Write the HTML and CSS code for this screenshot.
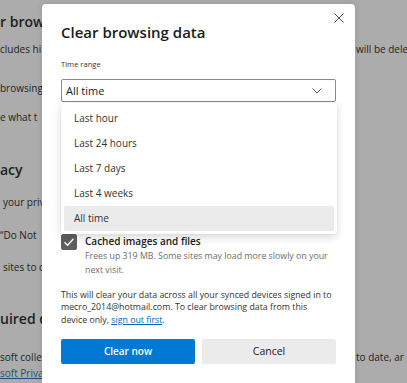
FILE: index.html
```html
<!DOCTYPE html>
<html lang="en">
<head>
<meta charset="utf-8">
<title>Clear browsing data</title>
<link rel="stylesheet" href="styles.css">
</head>
<body>
<div class="page">
  <div class="row heading r1"><span class="l">r brow</span></div>
  <div class="row r2"><span class="l">cludes hi</span><span class="r">will be dele</span></div>
  <div class="row r3"><span class="l">browsing</span></div>
  <div class="row r4"><span class="l">e what t</span></div>
  <div class="row heading r5"><span class="l">acy</span></div>
  <div class="row r6"><span class="l ind">your priv</span></div>
  <div class="row r7"><span class="l">“Do Not</span></div>
  <div class="row r8"><span class="l ind">sites to c</span></div>
  <div class="row heading r9"><span class="l">uired d</span></div>
  <div class="row r10"><span class="l">soft colle</span><span class="r">to date, ar</span></div>
  <div class="row r11"><span class="l"><span class="bglink">soft Priva</span></span></div>
</div>

<div class="dialog">
  <button class="close" aria-label="Close">
    <svg width="10" height="10" viewBox="0 0 10 10"><path d="M0.5 0.5L9.5 9.5M9.5 0.5L0.5 9.5" stroke="#4a4a4a" stroke-width="1" fill="none"/></svg>
  </button>
  <h2 class="title">Clear browsing data</h2>
  <div class="label">Time range</div>
  <div class="select">
    <span>All time</span>
    <svg width="10" height="6" viewBox="0 0 10 6"><path d="M0.5 0.5L5 5L9.5 0.5" stroke="#555" stroke-width="1" fill="none"/></svg>
  </div>

  <div class="options">
    <div class="opt">
      <span class="box checked"><svg width="16" height="16" viewBox="0 0 16 16"><path d="M3.5 8.2L6.6 11.2L12.5 4.8" stroke="#fff" stroke-width="1.3" fill="none"/></svg></span>
      <div class="otext"><div class="otitle">Cached images and files</div><div class="odesc">Frees up 319 MB. Some sites may load more slowly on your<br>next visit.</div></div>
    </div>
  </div>

  <p class="info">This will clear your data across all your synced devices signed in to<br>mecro_2014@hotmail.com. To clear browsing data from this<br>device only, <a class="link" href="#">sign out first</a>.</p>

  <div class="buttons">
    <button class="btn primary">Clear now</button>
    <button class="btn secondary">Cancel</button>
  </div>

  <ul class="dropdown">
    <li class="item">Last hour</li>
    <li class="item">Last 24 hours</li>
    <li class="item">Last 7 days</li>
    <li class="item">Last 4 weeks</li>
    <li class="item selected">All time</li>
  </ul>
</div>
</body>
</html>
```

FILE: styles.css
```css
html, body {
  margin: 0;
  padding: 0;
}
body {
  width: 407px;
  height: 383px;
  overflow: hidden;
  background: #acacac;
  font-family: "Open Sans", "Noto Sans", sans-serif;
  position: relative;
}

/* background settings page (dimmed) */
.page {
  color: #1f1f1f;
  font-size: 10px;
  line-height: 16px;
}
.row {
  display: flex;
  white-space: nowrap;
}
.row .l {
  flex: none;
  width: 42px;
}
.row .r {
  flex: none;
  margin-left: 314px;
}
.ind { padding-left: 3px; box-sizing: border-box; }
.heading {
  font-size: 14px;
  font-weight: 600;
  line-height: 24px;
}
.r1 { margin-top: 10px; }
.r2 { margin-top: 7px; }
.r3 { margin-top: 23px; }
.r4 { margin-top: 13px; }
.r5 { margin-top: 33px; }
.r6 { margin-top: 12px; }
.r7 { margin-top: 17px; }
.r8 { margin-top: 16px; }
.r9 { margin-top: 32px; }
.r10 { margin-top: 18px; }
.r11 { margin-top: 0; }
.bglink {
  color: #1d4c80;
  text-decoration: underline;
}

/* dialog */
.dialog {
  position: absolute;
  left: 42px;
  top: 4px;
  width: 313px;
  height: 420px;
  box-sizing: border-box;
  padding: 18px 19px 0;
  background: #fff;
  border-radius: 4px;
  box-shadow: 0 0 6px rgba(0,0,0,0.12);
}
.close {
  position: absolute;
  right: 11px;
  top: 9px;
  width: 10px;
  height: 10px;
  padding: 0;
  border: 0;
  background: none;
  display: block;
}
.close svg { display: block; }
.title {
  margin: 0;
  font-size: 15px;
  font-weight: 600;
  line-height: 20px;
  color: #1b1b1b;
}
.label {
  margin-top: 17px;
  font-size: 7.6px;
  line-height: 10px;
  color: #333;
}
.select {
  margin-top: 10px;
  height: 23px;
  box-sizing: border-box;
  border: 1px solid #8a8a8a;
  border-radius: 2px;
  display: flex;
  align-items: center;
  justify-content: space-between;
  padding: 0 13px 0 4px;
  font-size: 11px;
  color: #1b1b1b;
}
.select svg { display: block; }

.options {
  margin-top: 132px;
  display: flex;
  flex-direction: column;
  gap: 12px;
}
.opt {
  display: flex;
  align-items: flex-start;
  gap: 8px;
}
.box {
  flex: none;
  width: 16px;
  height: 16px;
  box-sizing: border-box;
  border: 1px solid #616161;
  border-radius: 2px;
  background: #fff;
}
.box.checked {
  background: #5f5f5f;
  border-color: #5f5f5f;
}
.box svg { display: block; margin: -1px; }
.otitle {
  font-size: 10px;
  font-weight: 600;
  line-height: 15px;
  color: #1b1b1b;
}
.odesc {
  font-size: 8.8px;
  line-height: 14px;
  color: #6e6e6e;
}
.info {
  margin: 11.6px 0 0;
  font-size: 8.8px;
  line-height: 12.8px;
  color: #333;
}
.link {
  color: #0066b4;
  text-decoration: underline;
}
.buttons {
  margin-top: 12px;
  display: grid;
  grid-template-columns: 1fr 1fr;
  gap: 7px;
}
.btn {
  height: 25px;
  border: 0;
  border-radius: 2px;
  font-family: inherit;
  padding: 0;
}
.primary {
  background: #0078d4;
  color: #fff;
  font-size: 10px;
  font-weight: 600;
}
.secondary {
  background: #ebebeb;
  color: #1b1b1b;
  font-size: 10.5px;
}

/* open time-range menu */
.dropdown {
  position: absolute;
  left: 19px;
  top: 99px;
  width: 276px;
  margin: 0;
  padding: 3px 0;
  list-style: none;
  background: #fff;
  border-radius: 3px;
  box-shadow: 0 3px 9px rgba(0,0,0,0.16), 0 0 2px rgba(0,0,0,0.06);
}
.item {
  height: 25px;
  line-height: 25px;
  margin: 0 3px;
  padding-left: 10px;
  font-size: 10px;
  color: #333;
  border-radius: 2px;
}
.item.selected {
  background: #ebebeb;
}
```
